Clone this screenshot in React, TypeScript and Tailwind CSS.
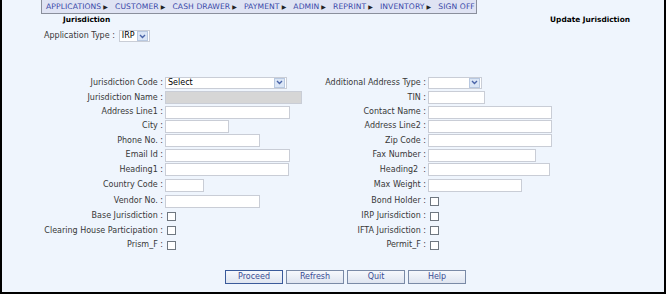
import React from 'react';

const menu = ['APPLICATIONS', 'CUSTOMER', 'CASH DRAWER', 'PAYMENT', 'ADMIN', 'REPRINT', 'INVENTORY', 'SIGN OFF'];

type Field =
  | { kind: 'text'; w: number; gray?: boolean }
  | { kind: 'select'; w: number; value?: string }
  | { kind: 'check' }
  | { kind: 'none' };

interface Row {
  h: number;
  left: string;
  leftField: Field;
  right: string;
  rightField: Field;
}

const rows: Row[] = [
  { h: 15, left: 'Jurisdiction Code :', leftField: { kind: 'select', w: 122, value: 'Select' }, right: 'Additional Address Type :', rightField: { kind: 'select', w: 54 } },
  { h: 15, left: 'Jurisdiction Name :', leftField: { kind: 'text', w: 137, gray: true }, right: 'TIN :', rightField: { kind: 'text', w: 57 } },
  { h: 14, left: 'Address Line1 :', leftField: { kind: 'text', w: 125 }, right: 'Contact Name :', rightField: { kind: 'text', w: 124 } },
  { h: 14, left: 'City :', leftField: { kind: 'text', w: 64 }, right: 'Address Line2 :', rightField: { kind: 'text', w: 124 } },
  { h: 15, left: 'Phone No. :', leftField: { kind: 'text', w: 95 }, right: 'Zip Code :', rightField: { kind: 'text', w: 124 } },
  { h: 14, left: 'Email Id :', leftField: { kind: 'text', w: 125 }, right: 'Fax Number :', rightField: { kind: 'text', w: 108 } },
  { h: 15, left: 'Heading1 :', leftField: { kind: 'text', w: 124 }, right: 'Heading2  :', rightField: { kind: 'text', w: 122 } },
  { h: 16, left: 'Country Code :', leftField: { kind: 'text', w: 39 }, right: 'Max Weight :', rightField: { kind: 'text', w: 94 } },
  { h: 16, left: 'Vendor No. :', leftField: { kind: 'text', w: 95 }, right: 'Bond Holder :', rightField: { kind: 'check' } },
  { h: 14, left: 'Base Jurisdiction :', leftField: { kind: 'check' }, right: 'IRP Jurisdiction :', rightField: { kind: 'check' } },
  { h: 15, left: 'Clearing House Participation :', leftField: { kind: 'check' }, right: 'IFTA Jurisdiction :', rightField: { kind: 'check' } },
  { h: 14, left: 'Prism_F :', leftField: { kind: 'check' }, right: 'Permit_F :', rightField: { kind: 'check' } },
];

function Arrow() {
  return (
    <span className="flex h-[10px] w-[11px] items-center justify-center border border-[#b8c8e0] bg-[#dbe6f6]">
      <svg width="7" height="5" viewBox="0 0 7 5">
        <path d="M1 1 L3.5 3.5 L6 1" fill="none" stroke="#4a64a8" strokeWidth="1.4" />
      </svg>
    </span>
  );
}

function FieldBox({ f }: { f: Field }) {
  if (f.kind === 'text') {
    return (
      <div
        style={{ width: f.w }}
        className={`h-[13px] border border-[#c9cdd6] ${f.gray ? 'bg-[#d6d6d6]' : 'bg-white'}`}
      />
    );
  }
  if (f.kind === 'select') {
    return (
      <div style={{ width: f.w }} className="flex h-[12px] items-center justify-between border border-[#c9cdd6] bg-white pl-[2px] pr-[1px]">
        <span className="text-[8px] leading-none text-black">{f.value ?? ''}</span>
        <Arrow />
      </div>
    );
  }
  if (f.kind === 'check') {
    return <div className="ml-[2px] h-[9px] w-[9px] border border-[#6f7780] bg-white" />;
  }
  return null;
}

export default function App() {
  return (
    <div className="h-[296px] w-[666px] bg-white" style={{ fontFamily: '"DejaVu Sans", Verdana, sans-serif' }}>
      <div className="relative h-[294px] w-[666px] border-x-2 border-b-2 border-black bg-[#eff5fd]">
        {/* menu */}
        <div className="ml-[39px] flex h-[14px] w-[436px] items-center gap-[7px] border border-[#8a8f9c] border-t-0 bg-[#dfe3f3] pl-[4px] text-[7.6px] leading-none tracking-[0.1px] text-[#3848a8]">
          {menu.map((m, i) => (
            <span key={m} className="flex items-center gap-[2px] whitespace-nowrap">
              {m}
              {i < menu.length - 1 && <span className="text-[6px] text-[#222]">▶</span>}
            </span>
          ))}
        </div>

        {/* titles */}
        <div className="flex h-[12px] items-center justify-between pl-[61px] pr-[34px] text-[7.4px] font-bold leading-none text-black">
          <span>Jurisdiction</span>
          <span>Update Jurisdiction</span>
        </div>

        <div className="mt-[3px] flex h-[14px] items-center pl-[42px] text-[8px] leading-none text-[#383838]">
          <span>Application Type :</span>
          <div className="ml-[4px] flex h-[12px] w-[31px] items-center justify-between border border-[#c9cdd6] bg-white pl-[2px] pr-[1px]">
            <span className="text-[8px] leading-none text-black">IRP</span>
            <Arrow />
          </div>
        </div>

        {/* form */}
        <div className="mt-[32px] text-[8px] leading-none text-[#383838]">
          {rows.map((r) => (
            <div key={r.left} style={{ height: r.h }} className="flex items-center">
              <div className="w-[161px] shrink-0 whitespace-nowrap text-right">{r.left}</div>
              <div className="ml-[2px] w-[140px] shrink-0">
                <FieldBox f={r.leftField} />
              </div>
              <div className="w-[121px] shrink-0 whitespace-pre text-right">{r.right}</div>
              <div className="ml-[2px]">
                <FieldBox f={r.rightField} />
              </div>
            </div>
          ))}
        </div>

        {/* buttons */}
        <div className="mt-[18px] flex gap-[3px] pl-[223px]">
          {['Proceed', 'Refresh', 'Quit', 'Help'].map((b, i) => (
            <button
              key={b}
              className={`h-[14px] w-[58px] border bg-gradient-to-b from-[#f6f8fc] to-[#dfe5f0] text-[8px] leading-none text-[#3a4c94] ${i === 0 ? 'border-[#3a5a9a]' : 'border-[#7a8aa6]'}`}
            >
              {b}
            </button>
          ))}
        </div>
      </div>
    </div>
  );
}
